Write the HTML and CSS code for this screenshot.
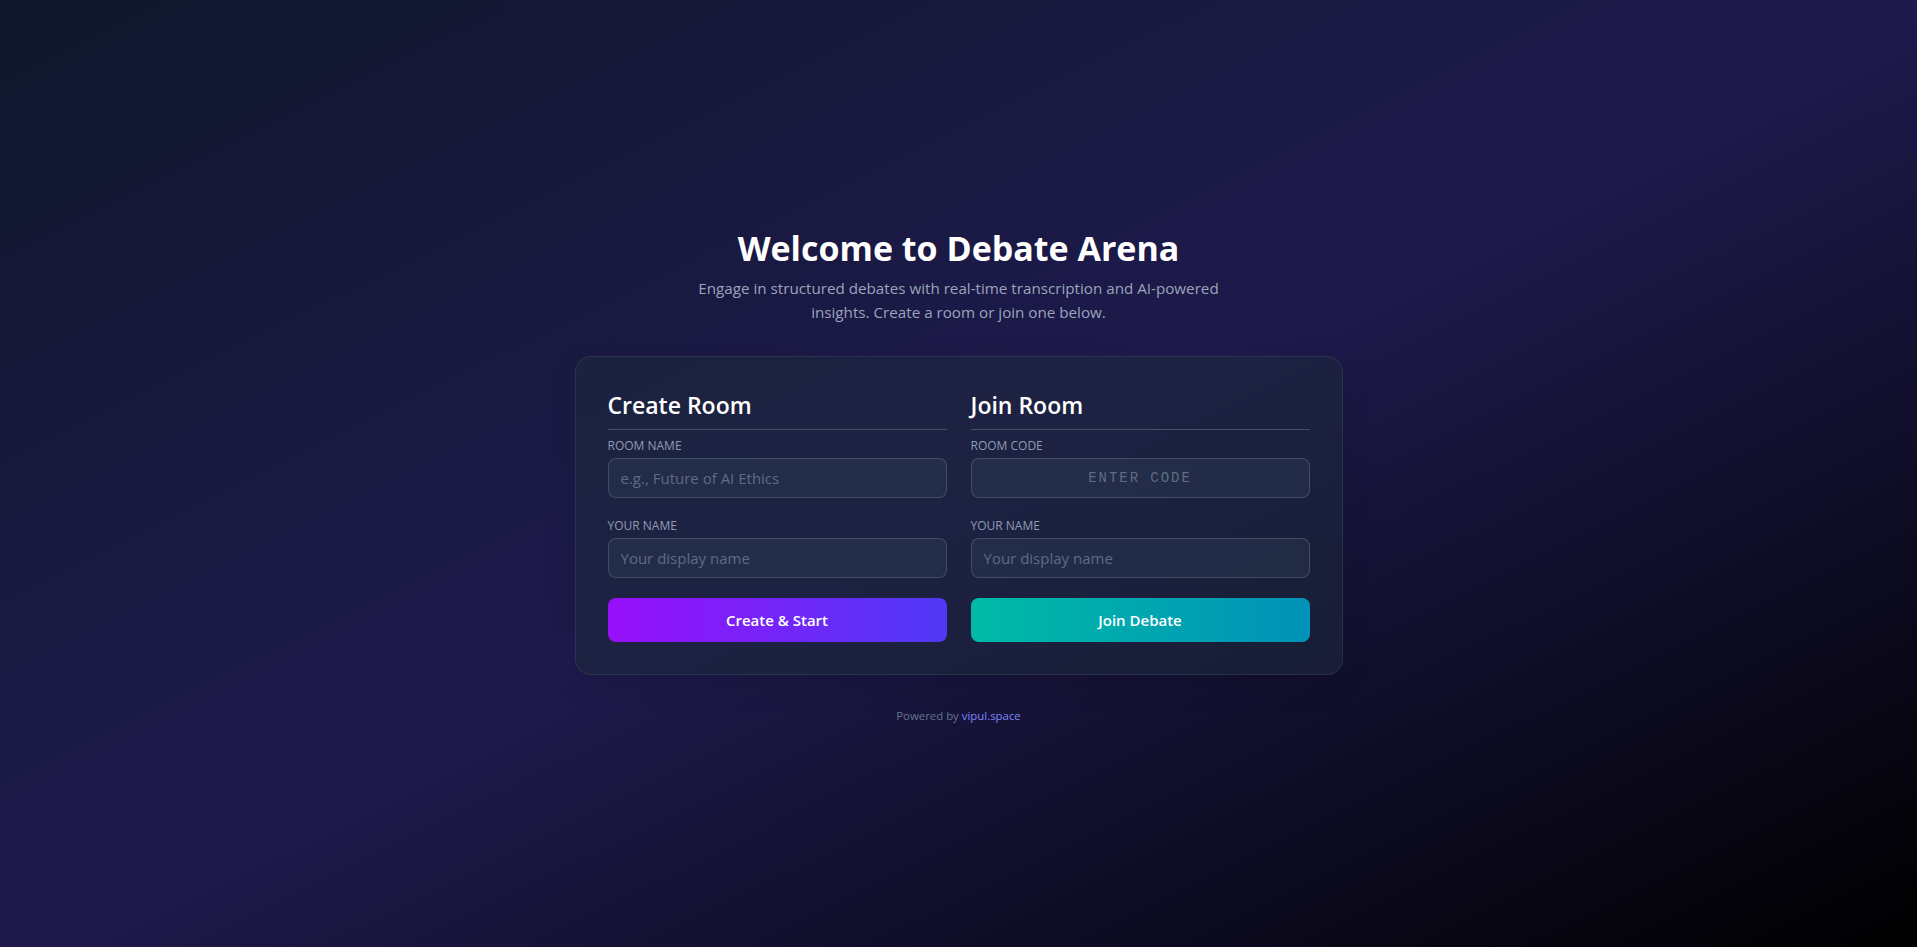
FILE: index.html
```html
<!DOCTYPE html>
<html lang="en">
<head>
<meta charset="utf-8">
<title>Debate Arena</title>
<link rel="stylesheet" href="styles.css">
</head>
<body>
<main class="page">
  <div class="wrap">
    <header class="hero">
      <h1 class="title">Welcome to Debate Arena</h1>
      <p class="subtitle">Engage in structured debates with real-time transcription and AI-powered insights. Create a room or join one below.</p>
    </header>
    <section class="card">
      <div class="col">
        <h2 class="col-title">Create Room</h2>
        <div class="field">
          <label class="label">Room Name</label>
          <input class="input" type="text" placeholder="e.g., Future of AI Ethics">
        </div>
        <div class="field">
          <label class="label">Your Name</label>
          <input class="input" type="text" placeholder="Your display name">
        </div>
        <button class="btn btn-create">Create &amp; Start</button>
      </div>
      <div class="col">
        <h2 class="col-title">Join Room</h2>
        <div class="field">
          <label class="label">Room Code</label>
          <input class="input input-code" type="text" placeholder="ENTER CODE">
        </div>
        <div class="field">
          <label class="label">Your Name</label>
          <input class="input" type="text" placeholder="Your display name">
        </div>
        <button class="btn btn-join">Join Debate</button>
      </div>
    </section>
    <footer class="footer">Powered by <a class="link" href="#">vipul.space</a></footer>
  </div>
</main>
</body>
</html>
```

FILE: styles.css
```css
* { box-sizing: border-box; }
html, body { margin: 0; padding: 0; }
body {
  font-family: "Open Sans", "Noto Sans", sans-serif;
  color: #fff;
  background: #000;
}
.page {
  min-height: 100vh;
  display: flex;
  align-items: center;
  justify-content: center;
  background: linear-gradient(to bottom right, #0f172b, #1e1a4d, #000000);
}
.wrap {
  width: 768px;
  padding-top: 5px;
  display: flex;
  flex-direction: column;
  align-items: center;
}
.hero { text-align: center; margin-bottom: 32px; }
.title {
  margin: 0 0 8px;
  font-size: 34px;
  line-height: 40px;
  font-weight: 700;
  color: #fff;
}
.subtitle {
  margin: 0 auto;
  max-width: 560px;
  font-size: 15.2px;
  line-height: 24px;
  color: #9aa4ba;
}
.card {
  width: 768px;
  display: grid;
  grid-template-columns: 1fr 1fr;
  column-gap: 24px;
  padding: 32px;
  border-radius: 16px;
  background: rgba(29, 41, 61, 0.55);
  border: 1px solid rgba(49, 65, 88, 0.6);
  box-shadow: 0 10px 30px rgba(0, 0, 0, 0.1);
}
.col { display: flex; flex-direction: column; gap: 20px; }
.col-title {
  margin: 0 0 -12px;
  padding-bottom: 8px;
  font-size: 23px;
  line-height: 32px;
  font-weight: 600;
  color: #fff;
  border-bottom: 1px solid rgba(69, 85, 108, 0.9);
}
.field { display: flex; flex-direction: column; gap: 4px; }
.label {
  font-size: 12px;
  line-height: 16px;
  text-transform: uppercase;
  color: #8f9bb3;
}
.input {
  height: 40px;
  width: 100%;
  padding: 0 12px;
  border-radius: 8px;
  border: 1px solid rgba(69, 85, 108, 0.85);
  background: rgba(49, 65, 88, 0.35);
  color: #fff;
  font-family: inherit;
  font-size: 15px;
  outline: none;
}
.input::placeholder { color: #5f6c82; }
.input-code {
  text-align: center;
  font-family: "Liberation Mono", "DejaVu Sans Mono", monospace;
  letter-spacing: 0.14em;
  font-size: 14px;
  text-transform: uppercase;
}
.btn {
  height: 44px;
  border: 0;
  border-radius: 8px;
  color: #fff;
  font-family: inherit;
  font-size: 15px;
  font-weight: 600;
  cursor: pointer;
}
.btn-create { background: linear-gradient(to right, #9810fa, #4f39f6); }
.btn-join { background: linear-gradient(to right, #00bba7, #0092b8); }
.footer {
  margin-top: 33px;
  font-size: 11.4px;
  line-height: 16px;
  color: #62748e;
}
.link { color: #7c86ff; text-decoration: none; }
```
